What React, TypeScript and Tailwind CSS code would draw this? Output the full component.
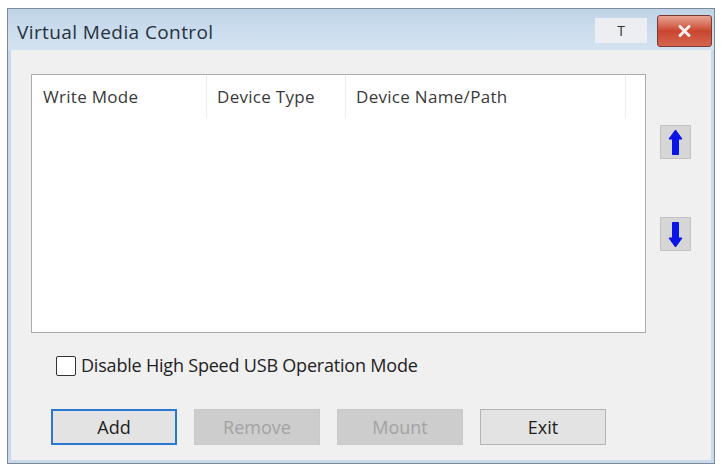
import React from 'react'

const font = { fontFamily: '"Open Sans", "Noto Sans", sans-serif' }

function ArrowButton({ dir }: { dir: 'up' | 'down' }) {
  return (
    <button
      type="button"
      className="flex h-[34px] w-[31px] items-center justify-center border border-[#c4c4c4] bg-[#d6d6d6]"
    >
      <svg width="15" height="27" viewBox="0 0 15 27" className={dir === 'down' ? 'rotate-180' : ''}>
        <path d="M7.5 1 L14 10 L10.5 10 L10.5 25.5 L4.5 25.5 L4.5 10 L1 10 Z" fill="#0a14e6" strokeLinejoin="round" stroke="#0a14e6" strokeWidth="1" />
      </svg>
    </button>
  )
}

function DialogButton({ label, variant }: { label: string; variant: 'focus' | 'disabled' | 'normal' }) {
  const cls =
    variant === 'focus'
      ? 'border-2 border-[#2b78d0] bg-[#e3e3e3] text-[#1e1e1e]'
      : variant === 'disabled'
        ? 'border border-[#c8c8c8] bg-[#cdcdcd] text-[#a2a2a2]'
        : 'border border-[#b4b4b4] bg-[#e3e3e3] text-[#1e1e1e]'
  return (
    <button type="button" className={`flex h-[36px] w-[126px] items-center justify-center text-[18px] ${cls}`}>
      {label}
    </button>
  )
}

export default function App() {
  return (
    <div className="h-[470px] w-[721px] bg-white pb-[6px] pl-[7px] pr-[6px] pt-[8px]" style={font}>
      <div className="flex h-full flex-col border border-[#7d8b99] bg-[#c7d9ea]">
        {/* title bar */}
        <div className="flex h-[41px] shrink-0 items-start bg-gradient-to-b from-[#c0d4e9] to-[#d4e3f1] pl-[9px] pr-[2px]">
          <span className="mt-[14px] text-[19px] leading-none tracking-[0.4px] text-[#27313d]">Virtual Media Control</span>
          <div className="ml-auto flex items-start gap-[10px] pt-[9px]">
            <div className="flex h-[25px] w-[52px] items-center justify-center bg-[#eceef1] text-[14px] text-[#333]">
              T
            </div>
            <div className="-mt-[3px] flex h-[32px] w-[55px] items-center justify-center rounded-[3px] border border-[#7a3a33] bg-gradient-to-b from-[#e8a394] via-[#c9452f] to-[#d4664f]">
              <svg width="13" height="12" viewBox="0 0 13 12">
                <path d="M2 1.5 L11 10.5 M11 1.5 L2 10.5" stroke="#fbeeee" strokeWidth="3" strokeLinecap="round" />
              </svg>
            </div>
          </div>
        </div>

        {/* body */}
        <div className="mx-[3px] mb-[3px] flex flex-1 flex-col bg-[#f0f0f0] pl-[20px] pt-[24px]">
          <div className="flex items-start">
            <div className="h-[259px] w-[615px] border border-[#acacac] bg-white">
              <div className="flex h-[44px] items-center text-[17px] tracking-[0.3px] text-[#3a3a3a]">
                <div className="flex h-full w-[175px] items-center border-r border-[#ececec] pl-[11px]">Write Mode</div>
                <div className="flex h-full w-[139px] items-center border-r border-[#ececec] pl-[10px]">Device Type</div>
                <div className="flex h-full w-[280px] items-center border-r border-[#ececec] pl-[10px]">Device Name/Path</div>
              </div>
            </div>
            <div className="ml-[14px] flex flex-col gap-[58px] pt-[51px]">
              <ArrowButton dir="up" />
              <ArrowButton dir="down" />
            </div>
          </div>

          <label className="ml-[25px] mt-[19px] flex items-center gap-[5px] text-[18px] text-[#222]">
            <span className="h-[20px] w-[20px] rounded-[2px] border border-[#333] bg-white" />
            <span className="tracking-[-0.2px]">Disable High Speed USB Operation Mode</span>
          </label>

          <div className="ml-[20px] mt-[30px] flex gap-[17px]">
            <DialogButton label="Add" variant="focus" />
            <DialogButton label="Remove" variant="disabled" />
            <DialogButton label="Mount" variant="disabled" />
            <DialogButton label="Exit" variant="normal" />
          </div>
        </div>
      </div>
    </div>
  )
}
